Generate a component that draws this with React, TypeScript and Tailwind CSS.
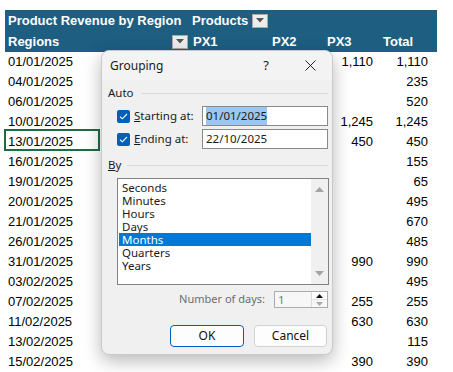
import React from 'react';

const rows: [string, string, string][] = [
  ['01/01/2025', '1,110', '1,110'],
  ['04/01/2025', '', '235'],
  ['06/01/2025', '', '520'],
  ['10/01/2025', '1,245', '1,245'],
  ['13/01/2025', '450', '450'],
  ['16/01/2025', '', '155'],
  ['19/01/2025', '', '65'],
  ['20/01/2025', '', '495'],
  ['21/01/2025', '', '670'],
  ['26/01/2025', '', '485'],
  ['31/01/2025', '990', '990'],
  ['03/02/2025', '', '495'],
  ['07/02/2025', '255', '255'],
  ['11/02/2025', '630', '630'],
  ['13/02/2025', '', '115'],
  ['15/02/2025', '390', '390'],
];

function Drop() {
  return (
    <span className="flex h-[14px] w-[16px] items-center justify-center border border-[#a8a8a8] bg-[#ededed]">
      <svg width="8" height="5" viewBox="0 0 8 5">
        <path d="M0 0h8L4 4.5z" fill="#555" />
      </svg>
    </span>
  );
}

function Check() {
  return (
    <span className="flex h-[13px] w-[13px] items-center justify-center rounded-[2px] bg-[#005fb8]">
      <svg width="9" height="7" viewBox="0 0 9 7">
        <path d="M1 3.6l2.3 2.2L8 1" stroke="white" strokeWidth="1.1" fill="none" />
      </svg>
    </span>
  );
}

const items = ['Seconds', 'Minutes', 'Hours', 'Days', 'Months', 'Quarters', 'Years'];

export default function App() {
  return (
    <div className="relative h-[372px] w-[453px] overflow-hidden bg-white font-['Liberation_Sans',Arial,sans-serif] text-[13px] text-black">
      <div className="ml-[5px] mt-[10px] w-[432px] bg-[#1d5e81] font-bold text-white">
        <div className="flex h-[21px] items-center">
          <div className="w-[185px] whitespace-nowrap pl-[3px]">Product Revenue by Region</div>
          <div className="flex items-center gap-[4px] pl-[2px]">
            Products
            <Drop />
          </div>
        </div>
        <div className="flex h-[21px] items-center">
          <div className="flex w-[185px] items-center justify-between pl-[3px] pr-[2px]">
            Regions
            <Drop />
          </div>
          <div className="w-[79px] pl-[3px]">PX1</div>
          <div className="w-[55px] pl-[3px]">PX2</div>
          <div className="w-[54px] pl-[3px]">PX3</div>
          <div className="w-[59px] pl-[5px]">Total</div>
        </div>
      </div>
      <div className="ml-[5px] w-[432px]">
        {rows.map((r, i) => (
          <div key={i} className="grid h-[20px] grid-cols-[95px_90px_79px_55px_54px_59px] items-center">
            <div className="relative pl-[3px]">
              {r[0]}
              {i === 4 && (
                <span className="absolute -left-[1px] -top-[3px] h-[22px] w-[96px] border-2 border-[#1e6c42]" />
              )}
            </div>
            <div />
            <div />
            <div />
            <div className="pr-[5px] text-right">{r[1]}</div>
            <div className="pr-[9px] text-right">{r[2]}</div>
          </div>
        ))}
      </div>

      {/* Grouping dialog */}
      <div className="absolute left-[101px] top-[50px] flex h-[305px] w-[232px] flex-col rounded-[8px] border border-[#c9c9c9] bg-[#f0f0f0] font-['Noto_Sans',sans-serif] text-[11.5px] text-[#1a1a1a] shadow-[0_6px_18px_rgba(0,0,0,0.28)]">
        <div className="flex h-[29px] items-center rounded-t-[8px] bg-[#f3f3f3] pl-[8px]">
          <span className="text-[12px]">Grouping</span>
          <span className="ml-auto mr-[36px] text-[13px]">?</span>
          <svg className="mr-[16px]" width="11" height="11" viewBox="0 0 11 11">
            <path d="M0.5 0.5l10 10M10.5 0.5l-10 10" stroke="#222" strokeWidth="1" />
          </svg>
        </div>
        <div className="flex flex-col pl-[6px] pr-[4px]">
          <div className="mt-[6px] flex h-[14px] items-center">
            <span>Auto</span>
            <span className="ml-[7px] h-px flex-1 bg-[#d9d9d9]" />
          </div>
          <div className="mt-[6px] flex h-[20px] items-center">
            <span className="ml-[9px]"><Check /></span>
            <span className="ml-[4px] w-[68px]"><u>S</u>tarting at:</span>
            <div className="flex h-[20px] w-[126px] items-center border border-[#8a8a8a] bg-white pl-[3px]">
              <span className="bg-[#9cc7f0]">01/01/2025</span>
            </div>
          </div>
          <div className="mt-[3px] flex h-[20px] items-center">
            <span className="ml-[9px]"><Check /></span>
            <span className="ml-[4px] w-[68px]"><u>E</u>nding at:</span>
            <div className="flex h-[20px] w-[126px] items-center border border-[#8a8a8a] bg-white pl-[3px]">
              <span>22/10/2025</span>
            </div>
          </div>
          <div className="mt-[9px] flex h-[14px] items-center">
            <span><u>B</u>y</span>
            <span className="ml-[6px] h-px flex-1 bg-[#d9d9d9]" />
          </div>
          <div className="ml-[9px] mt-[6px] flex h-[107px] w-[212px] border border-[#828282] bg-white">
            <div className="flex flex-1 flex-col pl-[1px] pt-[2px]">
              {items.map((it) => (
                <div
                  key={it}
                  className={
                    it === 'Months'
                      ? 'flex h-[13px] items-center bg-[#0078d7] pl-[3px] leading-[13px] text-white'
                      : 'flex h-[13px] items-center pl-[3px] leading-[13px]'
                  }
                >
                  {it}
                </div>
              ))}
            </div>
            <div className="flex w-[17px] flex-col items-center justify-between bg-[#f0f0f0] py-[8px]">
              <svg width="9" height="5" viewBox="0 0 9 5">
                <path d="M4.5 0L9 5H0z" fill="#a3a3a3" />
              </svg>
              <svg width="9" height="5" viewBox="0 0 9 5">
                <path d="M0 0h9L4.5 5z" fill="#a3a3a3" />
              </svg>
            </div>
          </div>
          <div className="mt-[6px] flex h-[17px] items-center justify-end">
            <span className="mr-[9px] text-[11px] text-[#6d6d6d]">Number of days:</span>
            <div className="flex h-[17px] w-[54px] border border-[#acacac] bg-[#f7f7f7]">
              <span className="flex flex-1 items-center pl-[3px] text-[#7a7a7a]">1</span>
              <div className="flex w-[16px] flex-col border-l border-[#dcdcdc]">
                <div className="flex flex-1 items-center justify-center bg-white">
                  <svg width="7" height="4" viewBox="0 0 7 4">
                    <path d="M3.5 0L7 4H0z" fill="#111" />
                  </svg>
                </div>
                <div className="flex flex-1 items-center justify-center border-t border-[#e2e2e2]">
                  <svg width="7" height="4" viewBox="0 0 7 4">
                    <path d="M0 0h7L3.5 4z" fill="#a8a8a8" />
                  </svg>
                </div>
              </div>
            </div>
          </div>
          <div className="mt-[17px] flex">
            <button className="ml-[62px] flex h-[22px] w-[74px] items-center justify-center rounded-[4px] border border-[#005fb8] bg-[#fdfdfd] text-[12px] text-[#111]">
              OK
            </button>
            <button className="ml-[10px] flex h-[22px] w-[73px] items-center justify-center rounded-[4px] border border-[#d3d3d3] bg-[#fdfdfd] text-[12px] text-[#111]">
              Cancel
            </button>
          </div>
        </div>
      </div>
    </div>
  );
}
